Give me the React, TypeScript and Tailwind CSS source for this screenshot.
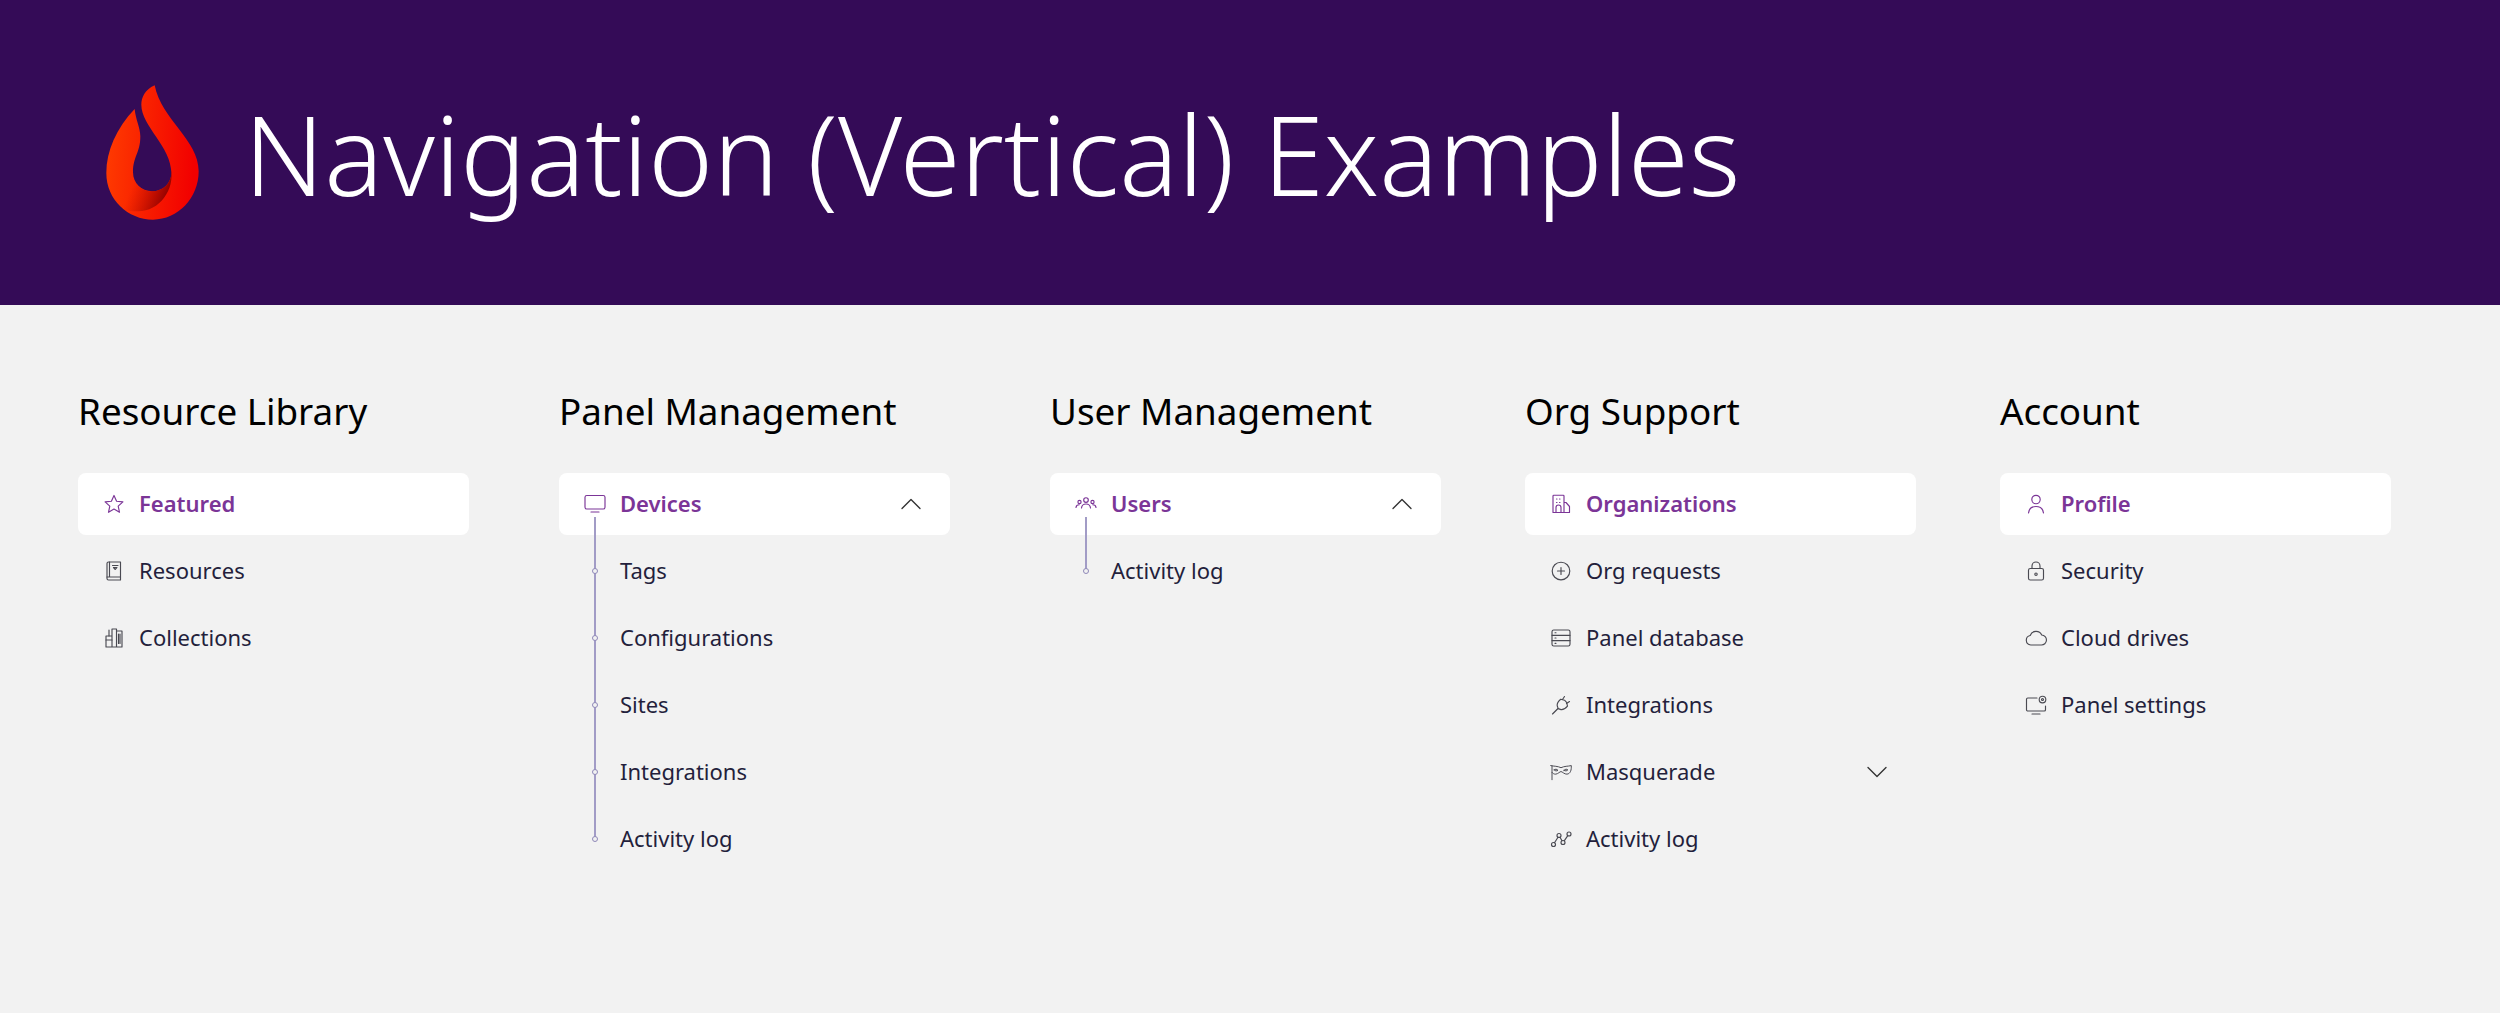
import React from "react";
import { ChevronDown, ChevronUp } from "lucide-react";

type IconProps = { className?: string };

// thin outline icon wrapper, all icons share a 24 box
const Ico: React.FC<React.PropsWithChildren<IconProps>> = ({ children, className }) => (
  <svg
    viewBox="0 0 24 24"
    fill="none"
    stroke="currentColor"
    strokeWidth="1.15"
    strokeLinecap="round"
    strokeLinejoin="round"
    className={className ?? "w-6 h-6"}
  >
    {children}
  </svg>
);

const StarIcon = () => (
  <Ico className="w-[26px] h-[26px]">
    <path d="M12 3.400l2.600 5.800 6.300.7-4.700 4.200 1.300 6.200L12 17.100l-5.500 3.200 1.300-6.200-4.700-4.200 6.300-.7z" />
  </Ico>
);
const BookIcon = () => (
  <Ico>
    <path d="M6.500 3h12v18h-12A1.500 1.500 0 0 1 5 19.500v-15A1.500 1.500 0 0 1 6.500 3z" />
    <path d="M5 18h13.500M7.500 3v15" />
    <path d="M10.500 6.500h5.500M11.500 8.500h3.500l-1.700 2z" />
  </Ico>
);
const ShelfIcon = () => (
  <Ico>
    <path d="M4 10h6v11H4zM10 3h4.500v18H10zM14.500 5H20v16h-5.500z" />
    <path d="M4 14h6M7 4v6M16.500 8v9.500M18 8v9.500" />
  </Ico>
);
const MonitorIcon = () => (
  <Ico>
    <rect x="2" y="3.500" width="20" height="13.500" rx="1.800" />
    <path d="M8 20h8" />
  </Ico>
);
const UsersIcon = () => (
  <Ico>
    <circle cx="12" cy="8" r="2.300" />
    <circle cx="5.500" cy="10" r="1.600" />
    <circle cx="18.500" cy="10" r="1.600" />
    <path d="M7.500 16c.3-2.800 2-4 4.500-4s4.200 1.200 4.500 4M2 15.500c.2-1.800 1.300-2.800 3.200-2.800M22 15.500c-.2-1.800-1.300-2.800-3.200-2.800" />
  </Ico>
);
const BuildingIcon = () => (
  <Ico>
    <path d="M4 20.500V4a.8.8 0 0 1 .8-.8h9.400a.8.8 0 0 1 .8.8v16.500zM15 10.500h2l3.500 4v6H15z" />
    <path d="M7.500 7h.5M10.500 7h.5M7.500 10.500h.5M10.500 10.500h.5M7 20.500v-5a2.500 2.500 0 0 1 5 0v5" />
  </Ico>
);
const PlusCircleIcon = () => (
  <Ico>
    <circle cx="12" cy="12" r="8.800" />
    <path d="M12 8.500v7M8.500 12h7" />
  </Ico>
);
const TableIcon = () => (
  <Ico>
    <rect x="3" y="4" width="18" height="16" rx="1.800" />
    <path d="M3 9.300h18M3 14.600h18M6 6.700h1M6 12h1M6 17.300h1" />
  </Ico>
);
const PlugIcon = () => (
  <Ico>
    <path d="M3.500 21l5.500-5.500" />
    <path d="M15.500 7.200l-3.800-.9c-2.300 2-3.800 4.200-3.500 6.500l1 2.800 2.800 1c2.300.3 4.500-1.200 6.500-3.500l-.9-3.800z" />
    <path d="M15.500 3.500l-2 3M20.500 8.500l-3 2" />
  </Ico>
);
const MaskIcon = () => (
  <svg viewBox="0 0 28 24" fill="none" stroke="currentColor" strokeWidth="1.150" strokeLinecap="round" strokeLinejoin="round" className="w-[28px] h-[24px]">
    <path d="M2 4.500c4 1 8 .5 12 2.500 4-2 8-1.500 12-2.500.3 5-.8 9.500-5 10-3 .3-5.500-3-7-3s-3 2.500-6 3c-2 .2-3.500-.8-4.500-2" />
    <path d="M6 9.500c1.200-1.200 3.300-1 4.500.6-1.500 1-3.500.8-4.500-.6zM17.500 10.100c1.200-1.600 3.300-1.800 4.500-.6-1 1.400-3 1.600-4.500.6z" />
    <path d="M3.500 5v16" />
  </svg>
);
const ActivityIcon = () => (
  <Ico>
    <circle cx="4.500" cy="17.500" r="2" />
    <circle cx="10" cy="8.500" r="2" />
    <circle cx="14" cy="15.500" r="2" />
    <circle cx="20" cy="7" r="2" />
    <path d="M5.500 15.800L9 10.200M11 10.300l2 3.500M15.200 13.800l3.600-5.100" />
  </Ico>
);
const PersonIcon = () => (
  <Ico>
    <circle cx="12" cy="7.500" r="4.200" />
    <path d="M4.500 21c.5-4.500 3.500-6.500 7.500-6.500s7 2 7.500 6.500" />
  </Ico>
);
const LockIcon = () => (
  <Ico>
    <rect x="4.500" y="9.500" width="15" height="11.500" rx="1.800" />
    <path d="M8 9.500V7a4 4 0 0 1 8 0v2.500" />
    <circle cx="12" cy="15.200" r="1.200" />
  </Ico>
);
const CloudIcon = () => (
  <Ico>
    <path d="M6.800 19a4.800 4.800 0 0 1-.6-9.500A6.200 6.200 0 0 1 17.700 9a5 5 0 0 1-.5 10z" />
  </Ico>
);
const PanelGearIcon = () => (
  <Ico>
    <path d="M13 5H3.800A1.300 1.300 0 0 0 2.500 6.300v10.400A1.300 1.300 0 0 0 3.800 18h16.400a1.300 1.300 0 0 0 1.300-1.300V13" />
    <path d="M8 21h8" />
    <circle cx="18.500" cy="6.500" r="3.300" />
    <circle cx="18.500" cy="6.500" r="1" />
  </Ico>
);

const FlameLogo = () => (
  <svg viewBox="130 130 300 420" className="w-[100px] h-[140px]">
    <defs>
      <linearGradient id="flame" x1="0" y1="0" x2="1" y2="0.1">
        <stop offset="0" stopColor="#ff3d00" />
        <stop offset="1" stopColor="#f20000" />
      </linearGradient>
      <linearGradient id="flameShade" x1="215" y1="445" x2="320" y2="485" gradientUnits="userSpaceOnUse">
        <stop offset="0" stopColor="#c01400" stopOpacity="0" />
        <stop offset="1" stopColor="#8c0000" />
      </linearGradient>
    </defs>
    <path
      fill="url(#flame)"
      d="M225 208C170 265 140 335 140 400C140 480 205 540 280 540C355 540 417 475 417 395C417 300 305 240 285 137C255 150 245 175 245 195C245 260 335 320 335 400C335 430 310 455 277 455C245 455 220 430 220 398C220 350 242 340 242 290C242 265 228 240 225 208Z"
    />
    <path
      fill="url(#flameShade)"
      d="M334 385C346 450 300 515 235 515C220 515 205 513 190 510C170 480 200 440 222 418C232 442 252 455 277 455C310 455 335 430 335 400Z"
    />
  </svg>
);

type Item = { label: string; icon?: React.ReactNode; arrow?: "up" | "down" };

const NavRow: React.FC<{ item: Item; active?: boolean }> = ({ item, active }) => (
  <div
    className={`flex items-center h-[62px] pl-[24px] pr-[21px] rounded-lg text-[22px] ${
      active ? "bg-white font-semibold text-[#7b3597]" : "text-[#241f3c]"
    }`}
  >
    <span className={`flex justify-center w-[24px] mr-[13px] ${active ? "text-[#7b3597]" : "text-[#4a4a52]"}`}>
      {item.icon}
    </span>
    <span className="flex-1 pb-[1px]">{item.label}</span>
    {item.arrow === "up" && <ChevronUp size={36} strokeWidth={0.9} className="text-[#333]" />}
    {item.arrow === "down" && <ChevronDown size={36} strokeWidth={0.9} className="text-[#333]" />}
  </div>
);

const TreeList: React.FC<{ parent: Item; items: string[] }> = ({ parent, items }) => (
  <div className="flex flex-col">
    <NavRow item={parent} active />
    <div className="relative">
      {/* connector line runs up into the parent row */}
      <span className="absolute left-[35px] top-[-18px] bottom-[29px] w-[2px] bg-[#a29cc6]" />
      {items.map((label) => (
        <div key={label} className="relative flex items-center h-[62px] mt-[5px] pl-[61px] pb-[1px] text-[22px] text-[#241f3c]">
          <span className="absolute left-[33px] top-[28px] w-[6px] h-[6px] rounded-full border border-[#8f88b8] bg-[#f2f2f2]" />
          {label}
        </div>
      ))}
    </div>
  </div>
);

const Column: React.FC<React.PropsWithChildren<{ title: string }>> = ({ title, children }) => (
  <section className="w-[391px]">
    <h2 className="text-[36.8px] leading-[50px] text-black mb-[37px] whitespace-nowrap">{title}</h2>
    {children}
  </section>
);

const PlainList: React.FC<{ items: Item[] }> = ({ items }) => (
  <div className="flex flex-col gap-[5px]">
    {items.map((item, i) => (
      <NavRow key={item.label} item={item} active={i === 0} />
    ))}
  </div>
);

export default function App() {
  return (
    <div className="min-h-screen bg-[#f2f2f2] font-['Noto_Sans',sans-serif]">
      <header className="flex items-center h-[305px] bg-[#340b57] pl-[103px] gap-[41px]">
        <FlameLogo />
        <h1 className="text-[110px] font-light leading-none text-white whitespace-nowrap">
          Navigation (Vertical) Examples
        </h1>
      </header>
      <main className="grid grid-cols-[481px_491px_475px_475px_391px] pl-[78px] pt-[81px]">
        <Column title="Resource Library">
          <PlainList
            items={[
              { label: "Featured", icon: <StarIcon /> },
              { label: "Resources", icon: <BookIcon /> },
              { label: "Collections", icon: <ShelfIcon /> },
            ]}
          />
        </Column>
        <Column title="Panel Management">
          <TreeList
            parent={{ label: "Devices", icon: <MonitorIcon />, arrow: "up" }}
            items={["Tags", "Configurations", "Sites", "Integrations", "Activity log"]}
          />
        </Column>
        <Column title="User Management">
          <TreeList parent={{ label: "Users", icon: <UsersIcon />, arrow: "up" }} items={["Activity log"]} />
        </Column>
        <Column title="Org Support">
          <PlainList
            items={[
              { label: "Organizations", icon: <BuildingIcon /> },
              { label: "Org requests", icon: <PlusCircleIcon /> },
              { label: "Panel database", icon: <TableIcon /> },
              { label: "Integrations", icon: <PlugIcon /> },
              { label: "Masquerade", icon: <MaskIcon />, arrow: "down" },
              { label: "Activity log", icon: <ActivityIcon /> },
            ]}
          />
        </Column>
        <Column title="Account">
          <PlainList
            items={[
              { label: "Profile", icon: <PersonIcon /> },
              { label: "Security", icon: <LockIcon /> },
              { label: "Cloud drives", icon: <CloudIcon /> },
              { label: "Panel settings", icon: <PanelGearIcon /> },
            ]}
          />
        </Column>
      </main>
    </div>
  );
}
